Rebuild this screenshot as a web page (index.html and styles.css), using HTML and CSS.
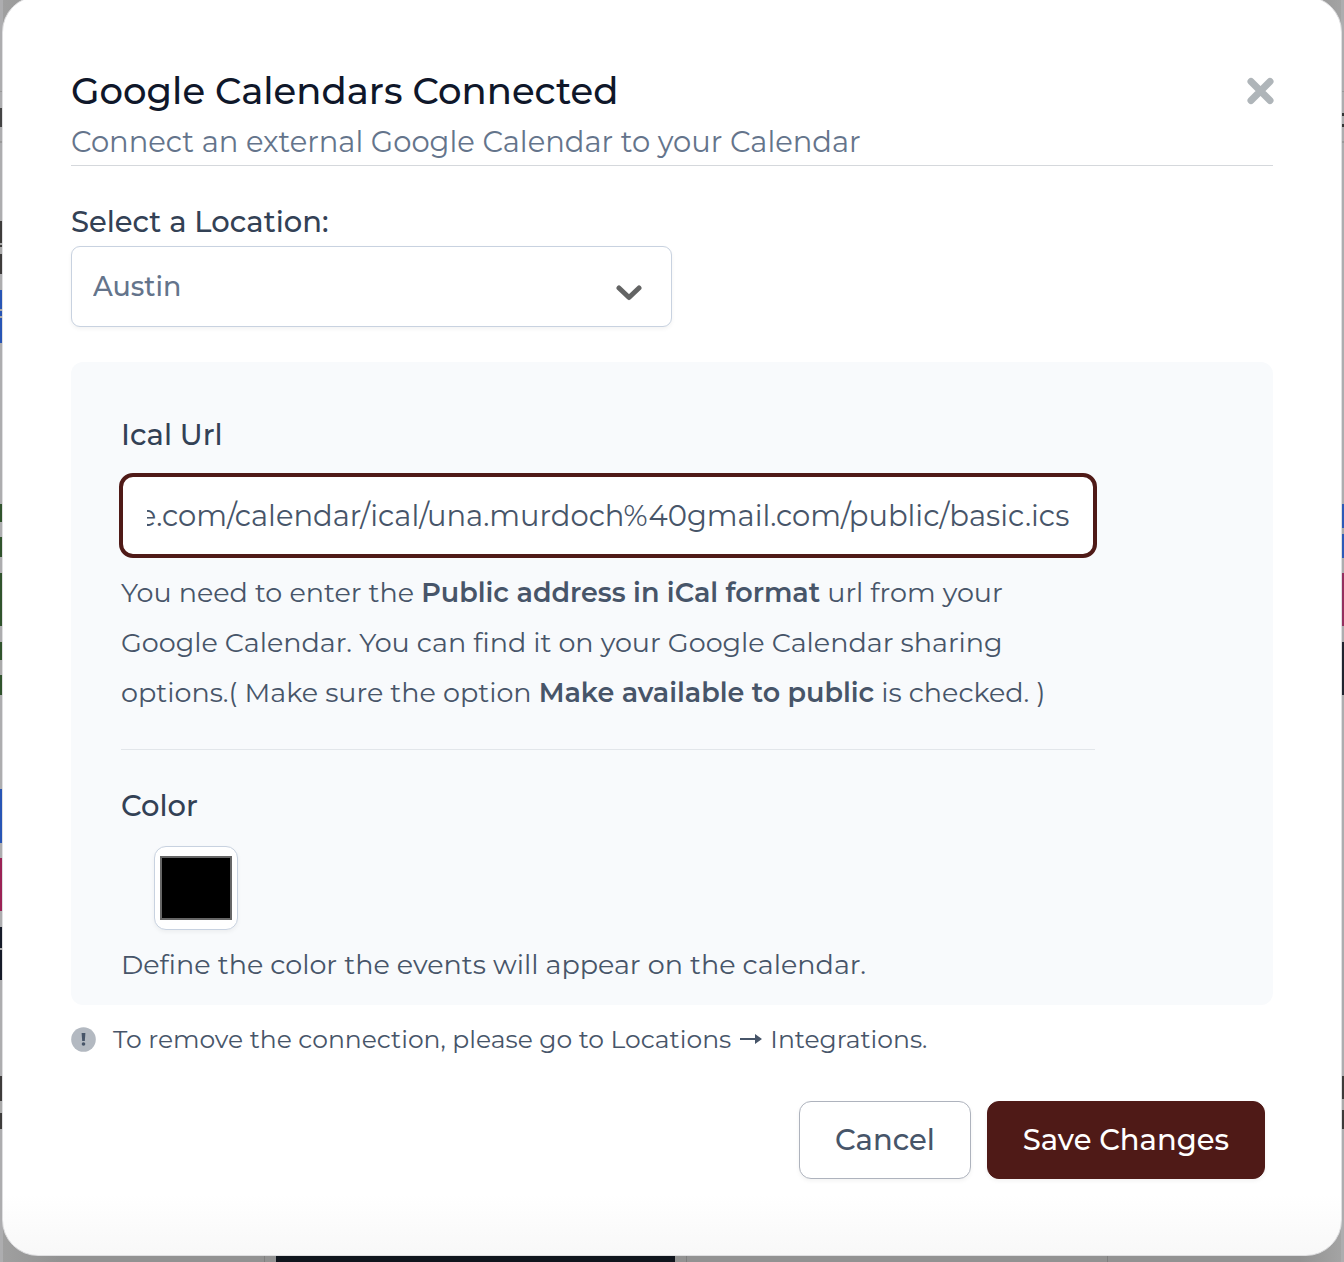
FILE: index.html
```
<!DOCTYPE html>
<html lang="en">
<head>
<meta charset="utf-8">
<title>Google Calendars Connected</title>
<link rel="stylesheet" href="styles.css">
</head>
<body>
<div class="backdrop">
  <form class="modal" role="dialog" aria-labelledby="dialog-title">
    <header class="modal-header">
      <div class="title-row">
        <h1 class="title" id="dialog-title">Google Calendars Connected</h1>
        <button class="close" type="button" aria-label="Close">
          <svg width="26" height="28" viewBox="0 0 26 28" overflow="visible" aria-hidden="true"><path d="M4 4.500 L23 23.500 M23 4.500 L4 23.500" fill="none" stroke="#afb5b9" stroke-width="7" stroke-linecap="round"/></svg>
        </button>
      </div>
      <p class="subtitle">Connect an external Google Calendar to your Calendar</p>
    </header>

    <div class="location">
      <label class="label" for="location">Select a Location:</label>
      <div class="select-wrap">
        <select class="select" id="location"><option>Austin</option></select>
        <svg class="chevron" width="26" height="16" viewBox="0 0 26 16" aria-hidden="true"><path d="M3 3 L13 12.500 L23 3" fill="none" stroke="#636464" stroke-width="5" stroke-linecap="round" stroke-linejoin="round"/></svg>
      </div>
    </div>

    <section class="panel">
      <div class="field">
        <label class="label" for="ical-url">Ical Url</label>
        <input class="url" id="ical-url" type="text" value="https://calendar.google.com/calendar/ical/una.murdoch%40gmail.com/public/basic.ics">
        <p class="help">You need to enter the <strong>Public address in iCal format</strong> url from your<br>Google Calendar. You can find it on your Google Calendar sharing<br>options.( Make sure the option <strong>Make available to public</strong> is checked. )</p>
      </div>
      <div class="field color-field">
        <label class="label" for="event-color">Color</label>
        <input class="swatch" id="event-color" type="color" value="#000000">
        <p class="help">Define the color the events will appear on the calendar.</p>
      </div>
    </section>

    <p class="note">
      <svg width="25" height="25" viewBox="0 0 25 25" aria-hidden="true"><circle cx="12.500" cy="12.500" r="12.300" fill="#b3b9c1"/><path d="M10.600 6 h3.800 l-.6 8 h-2.600z" fill="#475569"/><circle cx="12.500" cy="17" r="1.800" fill="#475569"/></svg>
      <span>To remove the connection, please go to Locations <svg class="arrow" width="22" height="12" viewBox="0 0 22 12" role="img" aria-label="to"><path d="M0 5h15V1l7 5-7 5V7H0z" fill="#475569"/></svg> Integrations.</span>
    </p>

    <footer class="actions">
      <button class="button" type="button">Cancel</button>
      <button class="button primary" type="submit">Save Changes</button>
    </footer>
  </form>
</div>
<script src="script.js"></script>
</body>
</html>
```
FILE: styles.css
```
* { box-sizing: border-box; }
body {
  margin: 0;
  font-family: Montserrat, Inter, sans-serif;
  color: #475569;
}
h1, p { margin: 0; }
button, input, select { font: inherit; color: inherit; }

/* The dimmed calendar behind the dialog */
.backdrop {
  position: relative;
  min-height: 100vh;
  overflow: hidden;
  padding: 0 2px 6px;
  background: linear-gradient(90deg, #a0a0a0, #929292 60px 264px, #7f7f7f 264px 265px, #929292 265px 276px, #10151d 276px 675px, #929292 675px 686px, #7f7f7f 686px 687px, #929292 687px 1107px, #7f7f7f 1107px 1108px, #929292 1108px 1300px, #a5a5a5);
}
.backdrop::before, .backdrop::after {
  content: "";
  position: absolute;
  top: 0;
  bottom: 0;
  width: 3px;
}
.backdrop::before {
  left: 0;
  background: linear-gradient(#adadaf 91px, #999 91px 92px, #adadaf 92px 108px, #444 108px 127px, #adadaf 127px 141px, #999 141px 143px, #adadaf 143px 221px, #3d3b3a 221px 243px, #aaa 243px 245px, #3d3b3a 245px 247px, #aaa 247px 254px, #3d3b3a 254px 274px, #adadaf 274px 290px, #2855b5 290px 309px, #aaa 309px 311px, #2855b5 311px 316px, #aaa 316px 318px, #2855b5 318px 343px, #adadaf 343px 504px, #30532c 504px 522px, #adadaf 522px 537px, #30532c 537px 557px, #adadaf 557px 573px, #30532c 573px 626px, #adadaf 626px 642px, #30532c 642px 660px, #aaa 660px 675px, #30532c 675px 695px, #adadaf 695px 789px, #2855b5 789px 843px, #adadaf 843px 858px, #9b2255 858px 911px, #adadaf 911px 927px, #151a28 927px 948px, #aaa 948px 950px, #151a28 950px 980px, #adadaf 980px 1076px, #3d3b3a 1076px 1101px, #aaa 1101px 1113px, #3d3b3a 1113px 1129px, #adadaf 1129px);
}
.backdrop::after {
  right: 0;
  background: linear-gradient(#adadaf 91px, #999 91px 92px, #adadaf 92px 113px, #333 113px 116px, #adadaf 116px 124px, #333 124px 127px, #adadaf 127px 141px, #999 141px 143px, #adadaf 143px 504px, #2d5ab7 504px 528px, #aaa 528px 534px, #2d5ab7 534px 558px, #adadaf 558px 573px, #93305f 573px 626px, #adadaf 626px 642px, #20242f 642px 695px, #adadaf 695px 1076px, #3d3b3a 1076px 1099px, #aaa 1099px 1110px, #3d3b3a 1110px 1129px, #adadaf 1129px);
}
.modal {
  position: relative;
  z-index: 1;
  margin-top: -4px;
  padding: 62px 68px 76px;
  border: 1px solid #dfdfe1;
  border-radius: 36px;
  background: linear-gradient(#fff calc(100% - 60px), #f8f8f8);
}
.modal-header { border-bottom: 1px solid #d5d8dc; padding-bottom: 4px; }
.title-row { display: flex; justify-content: space-between; align-items: center; height: 64px; }
.title { font-size: 37px; font-weight: 500; line-height: 64px; color: #0f172a; }
.close { display: flex; padding: 0; border: 0; background: none; }
.subtitle { font-size: 29px; font-weight: 450; line-height: 38px; color: #64748b; }

.location { margin-top: 38px; max-width: 601px; }
.label { display: block; font-size: 29px; font-weight: 500; line-height: 36px; color: #334155; }
.select-wrap { position: relative; margin-top: 6px; }
.select {
  display: block;
  width: 100%;
  height: 81px;
  padding: 0 21px;
  border: 1px solid #c8d2e0;
  border-radius: 9px;
  appearance: none;
  background: #fff;
  box-shadow: 0 2px 4px #0000000d;
  color: #64748b;
  font-size: 27px;
  font-weight: 500;
}
.chevron { position: absolute; right: 30px; top: 39px; pointer-events: none; }

.panel {
  margin-top: 35px;
  padding: 55px 178px 15px 50px;
  border-radius: 12px;
  background: #f8fafc;
}
.field { display: flex; flex-direction: column; }
.url {
  margin: 20px -2px 10px;
  height: 85px;
  padding: 0 24px;
  border: 4px solid #4f1a17;
  border-radius: 14px;
  background: #fff;
  font-size: 29px;
}
.help { font-size: 27px; line-height: 50px; white-space: nowrap; }
.help strong { font-weight: 600; }
.color-field { margin-top: 31px; padding-top: 38px; border-top: 1px solid #e2e6ea; }
.swatch {
  width: 84px;
  height: 84px;
  margin: 22px 0 10px 33px;
  padding: 9px 5px;
  border: 1px solid #c8d2e0;
  border-radius: 12px;
  appearance: none;
  background: #fff;
  box-shadow: 0 2px 4px #0000000d;
}
.swatch::-webkit-color-swatch-wrapper { padding: 0; }
.swatch::-webkit-color-swatch { border: 2px solid #666; border-radius: 0; }

.note { display: flex; align-items: center; gap: 17px; margin-top: 14px; font-size: 25px; line-height: 40px; }
.arrow { margin: 0 2px; vertical-align: 3px; }
.actions { display: flex; justify-content: flex-end; gap: 16px; margin-top: 42px; padding-right: 8px; }
.button {
  height: 78px;
  padding: 0 35px 2px;
  border: 1px solid #aeb3bd;
  border-radius: 12px;
  background: #fff;
  box-shadow: 0 2px 4px #0000000d;
  font-size: 29px;
  font-weight: 500;
}
.primary { border-color: #4f1a17; background: #4f1a17; color: #fff; }
```
FILE: script.js
```
// Keep the end of the address in view.
const url = document.getElementById("ical-url");
url.scrollLeft = url.scrollWidth;
```
